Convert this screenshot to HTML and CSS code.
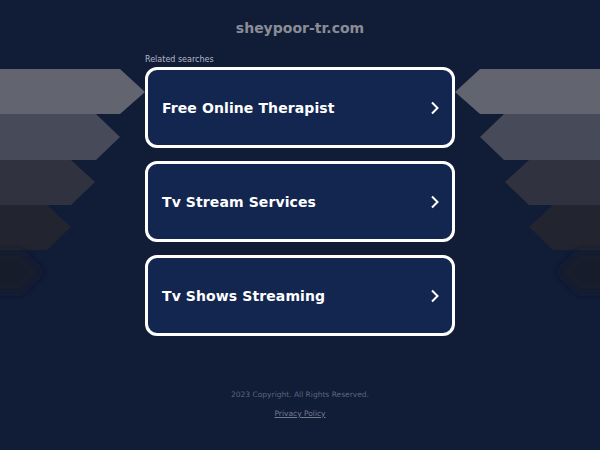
FILE: index.html
```html
<!DOCTYPE html>
<html>
<head>
<meta charset="utf-8">
<link rel="stylesheet" href="styles.css">
</head>
<body>
<div class="page">
  <svg class="bands" width="600" height="450" viewBox="0 0 600 450" aria-hidden="true">
    <defs>
      <filter id="blur" x="-100%" y="-100%" width="300%" height="300%"><feGaussianBlur stdDeviation="4"/></filter>
    </defs>
    <polygon points="0,69 120,69 145,92 120,114 0,114" fill="#62656f"/>
    <polygon points="0,114 96,114 120,137 96,160 0,160" fill="#474a58"/>
    <polygon points="0,160 71,160 95,182 71,205 0,205" fill="#30333f"/>
    <polygon points="0,205 47,205 71,227 47,250 0,250" fill="#22242f"/>
    <polygon points="-10,252 22,252 42,272 22,292 -10,292" fill="#181b2b" filter="url(#blur)"/>
    <polygon points="600,69 480,69 455,92 480,114 600,114" fill="#62656f"/>
    <polygon points="600,114 504,114 480,137 504,160 600,160" fill="#474a58"/>
    <polygon points="600,160 529,160 505,182 529,205 600,205" fill="#30333f"/>
    <polygon points="600,205 553,205 529,227 553,250 600,250" fill="#22242f"/>
    <polygon points="610,252 578,252 558,272 578,292 610,292" fill="#181b2b" filter="url(#blur)"/>
  </svg>
  <header class="top">
    <h1 class="domain">sheypoor-tr.com</h1>
  </header>
  <main class="content">
    <div class="label">Related searches</div>
    <ul class="links">
      <li class="card"><span class="card-text">Free Online Therapist</span><svg class="chev" width="10" height="14" viewBox="0 0 10 14"><polyline points="2,1.5 7.5,7 2,12.5" fill="none" stroke="#fff" stroke-width="2"/></svg></li>
      <li class="card"><span class="card-text">Tv Stream Services</span><svg class="chev" width="10" height="14" viewBox="0 0 10 14"><polyline points="2,1.5 7.5,7 2,12.5" fill="none" stroke="#fff" stroke-width="2"/></svg></li>
      <li class="card"><span class="card-text">Tv Shows Streaming</span><svg class="chev" width="10" height="14" viewBox="0 0 10 14"><polyline points="2,1.5 7.5,7 2,12.5" fill="none" stroke="#fff" stroke-width="2"/></svg></li>
    </ul>
  </main>
  <footer class="foot">
    <div class="copy">2023 Copyright. All Rights Reserved.</div>
    <a class="privacy" href="#">Privacy Policy</a>
  </footer>
</div>
</body>
</html>
```
FILE: styles.css
```css
html, body {
  margin: 0;
  padding: 0;
}
body {
  background: #111c37;
  font-family: "DejaVu Sans", sans-serif;
  width: 600px;
  height: 450px;
  overflow: hidden;
}
.page {
  position: relative;
  width: 600px;
  height: 450px;
}
.bands {
  position: absolute;
  left: 0;
  top: 0;
  z-index: 0;
}
.top {
  position: relative;
  z-index: 1;
  padding-top: 19px;
  text-align: center;
}
.domain {
  margin: 0;
  font-size: 14px;
  line-height: 18px;
  font-weight: bold;
  color: #8a8d96;
}
.content {
  position: relative;
  z-index: 1;
  width: 310px;
  margin: 0 auto;
  padding-top: 18px;
}
.label {
  font-size: 8px;
  line-height: 10px;
  color: #b4b8c4;
  margin-bottom: 2px;
}
.links {
  list-style: none;
  margin: 0;
  padding: 0;
  display: flex;
  flex-direction: column;
  gap: 13px;
}
.card {
  box-sizing: border-box;
  height: 81px;
  border: 3px solid #ffffff;
  border-radius: 12px;
  background: #13264f;
  display: flex;
  align-items: center;
  justify-content: space-between;
  padding: 0 12px 0 14px;
}
.card-text {
  color: #ffffff;
  font-size: 14px;
  font-weight: bold;
  letter-spacing: 0.1px;
}
.chev {
  display: block;
}
.foot {
  position: relative;
  z-index: 1;
  text-align: center;
  padding-top: 54px;
}
.copy {
  font-size: 7.5px;
  line-height: 10px;
  color: #5e6579;
}
.privacy {
  display: inline-block;
  margin-top: 9px;
  font-size: 7.5px;
  line-height: 10px;
  color: #737a8c;
  text-decoration: underline;
}
```
